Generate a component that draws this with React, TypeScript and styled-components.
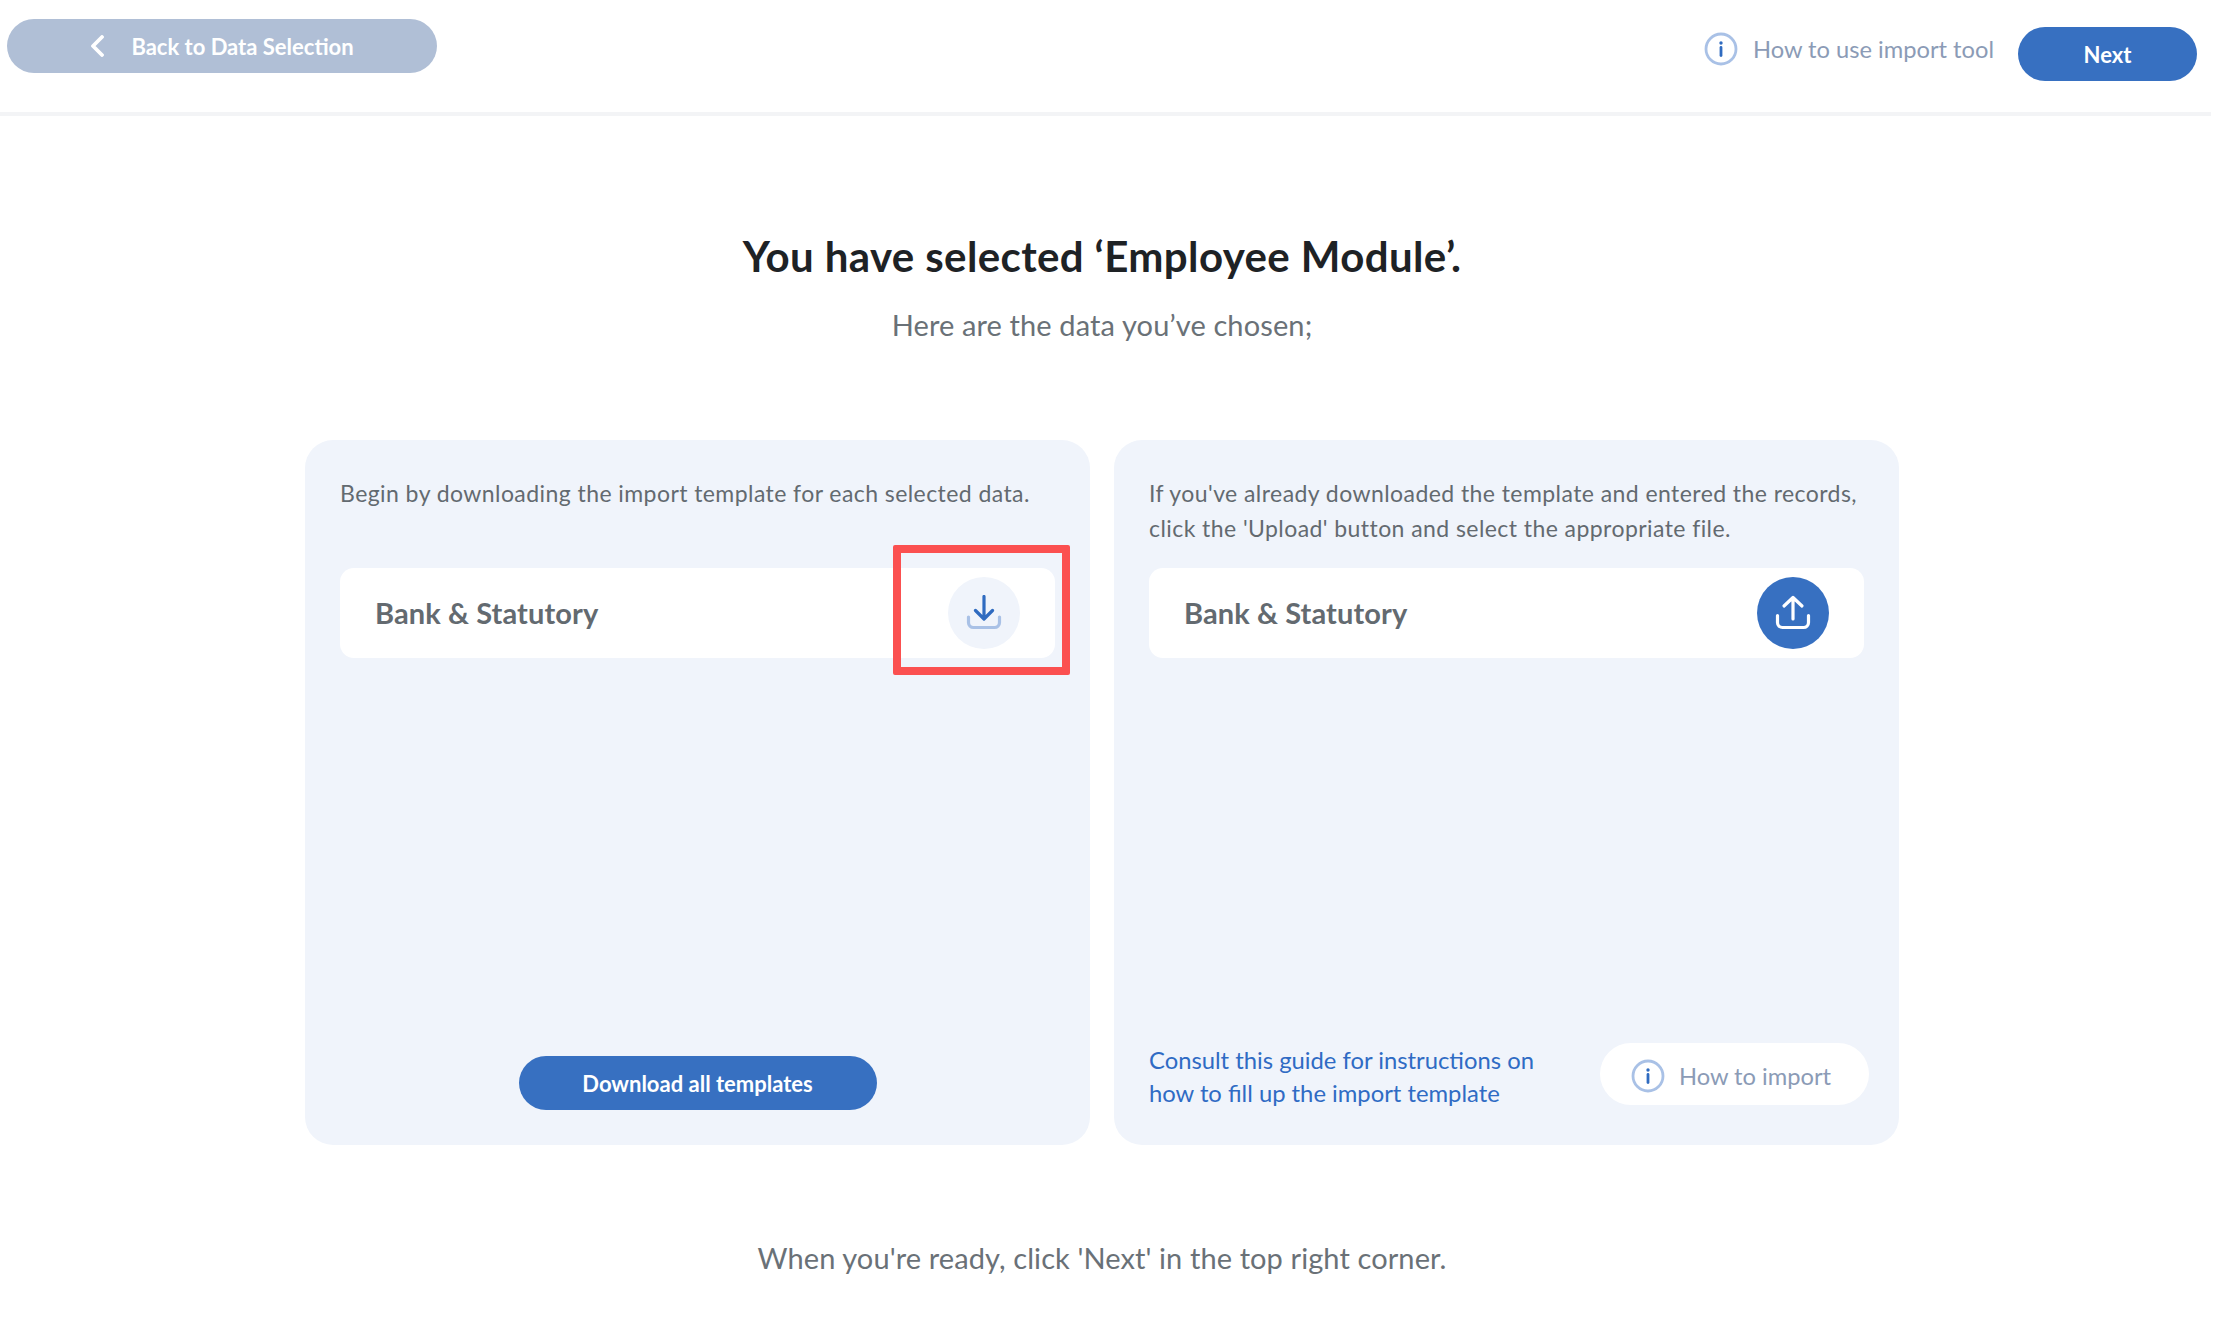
import React from "react";
import styled, { createGlobalStyle } from "styled-components";

const GlobalStyle = createGlobalStyle`
  html, body {
    margin: 0;
    padding: 0;
    background: #ffffff;
    font-family: "Lato", "Liberation Sans", sans-serif;
  }
  * {
    box-sizing: border-box;
  }
`;

const Page = styled.div`
  width: 2211px;
  height: 1337px;
  overflow: hidden;
  display: flex;
  flex-direction: column;
`;

const Header = styled.header`
  height: 116px;
  flex: none;
  display: flex;
  justify-content: space-between;
  align-items: flex-start;
  border-bottom: 4px solid #f3f4f6;
  padding: 19px 14px 0 7px;
`;

const Pill = styled.button<{ $width: number; $muted?: boolean }>`
  width: ${(props) => props.$width}px;
  height: 54px;
  flex: none;
  display: flex;
  align-items: center;
  justify-content: center;
  gap: 27px;
  border: none;
  border-radius: 27px;
  padding: 0;
  background: ${(props) => (props.$muted ? "#b0bfd6" : "#3770c1")};
  color: #ffffff;
  font-family: inherit;
  font-size: 22px;
  font-weight: 700;
`;

const HeaderRight = styled.div`
  display: flex;
  align-items: center;
  gap: 24px;
  margin-top: 8px;
`;

const HelpLink = styled.div`
  display: flex;
  align-items: center;
  gap: 15px;
  margin-bottom: 10px;
  color: #8b9bb6;
  font-size: 23.7px;
`;

const Main = styled.main`
  flex: 1;
  display: flex;
  flex-direction: column;
  align-items: center;
  padding-right: 7px;
`;

const Title = styled.h1`
  margin: 112px 0 0;
  height: 56px;
  line-height: 56px;
  color: #1e2225;
  font-size: 42px;
  font-weight: 700;
  letter-spacing: 0.38px;
`;

const Subtitle = styled.p`
  margin: 21px 0 0;
  height: 40px;
  line-height: 40px;
  color: #6a7177;
  font-size: 29px;
  letter-spacing: 0.12px;
`;

const Cards = styled.div`
  display: flex;
  gap: 24px;
  margin-top: 95px;
`;

const Card = styled.section`
  width: 785px;
  height: 705px;
  display: flex;
  flex-direction: column;
  border-radius: 28px;
  background: #f0f4fb;
  padding: 36px 35px 35px 35px;
`;

const CardText = styled.p`
  margin: 0;
  height: 92px;
  color: #636a70;
  font-size: 23px;
  line-height: 35px;
  letter-spacing: 0.43px;
`;

const Row = styled.div`
  position: relative;
  height: 90px;
  display: flex;
  align-items: center;
  justify-content: space-between;
  border-radius: 14px;
  background: #ffffff;
  padding: 0 35px;
`;

const RowLabel = styled.span`
  margin-bottom: 2px;
  color: #636a70;
  font-size: 29px;
  font-weight: 700;
  letter-spacing: 0.1px;
`;

const RoundIcon = styled.div<{ $filled?: boolean }>`
  width: 72px;
  height: 72px;
  display: flex;
  align-items: center;
  justify-content: center;
  border-radius: 50%;
  background: ${(props) => (props.$filled ? "#3770c1" : "#f0f4fb")};
`;

const Highlight = styled.div`
  position: absolute;
  top: -23px;
  right: -15px;
  width: 177px;
  height: 130px;
  border: 8px solid #fb5050;
  border-radius: 2px;
`;

const CardFooter = styled.div<{ $center?: boolean }>`
  margin-top: auto;
  display: flex;
  align-items: flex-end;
  justify-content: ${(props) => (props.$center ? "center" : "space-between")};
`;

const GuideLink = styled.div`
  color: #2f6bc4;
  font-size: 23.8px;
  line-height: 33px;
`;

const ImportPill = styled.div`
  width: 269px;
  height: 62px;
  display: flex;
  align-items: center;
  justify-content: center;
  gap: 14px;
  border-radius: 31px;
  background: #ffffff;
  color: #8b9bb6;
  font-size: 23.7px;
  margin: 0 -5px 5px 0;
  padding: 3px 7px 0 0;
`;

const FooterText = styled.p`
  margin: 93px 0 0;
  height: 40px;
  line-height: 40px;
  color: #6a7177;
  font-size: 29px;
  letter-spacing: 0.1px;
`;

const InfoIcon = () => (
  <svg width="34" height="34" viewBox="0 0 34 34" fill="none">
    <circle cx="17" cy="17" r="15" stroke="#a9c1e6" strokeWidth="2.8" />
    <circle cx="17" cy="11" r="1.7" fill="#2f6bc0" />
    <path d="M17 15.500v8" stroke="#2f6bc0" strokeWidth="2.8" strokeLinecap="round" />
  </svg>
);

const ChevronLeft = () => (
  <svg width="14" height="22" viewBox="0 0 14 22" fill="none">
    <path d="M12 2L3 11l9 9" stroke="#ffffff" strokeWidth="3.8" strokeLinecap="round" strokeLinejoin="round" />
  </svg>
);

const DownloadIcon = () => (
  <svg width="36" height="36" viewBox="0 0 36 36" fill="none">
    <path d="M2.500 22v5.500a5 5 0 0 0 5 5h21a5 5 0 0 0 5-5V22" stroke="#a9c1e6" strokeWidth="3.2" strokeLinecap="round" />
    <path d="M18 1.500v22M9.500 15.500l8.500 8.500 8.500-8.500" stroke="#2f6bc0" strokeWidth="3.2" strokeLinecap="round" strokeLinejoin="round" />
  </svg>
);

const UploadIcon = () => (
  <svg width="36" height="36" viewBox="0 0 36 36" fill="none">
    <path d="M2.500 20.500v7a5 5 0 0 0 5 5h21a5 5 0 0 0 5-5v-7" stroke="#ffffff" strokeWidth="3.2" strokeLinecap="round" />
    <path d="M18 24V2.500M9 11l9-8.500 9 8.500" stroke="#ffffff" strokeWidth="3.2" strokeLinecap="round" strokeLinejoin="round" />
  </svg>
);

const App: React.FC = () => {
  return (
    <Page>
      <GlobalStyle />
      <Header>
        <Pill $width={430} $muted>
          <ChevronLeft />
          Back to Data Selection
        </Pill>
        <HeaderRight>
          <HelpLink>
            <InfoIcon />
            How to use import tool
          </HelpLink>
          <Pill $width={179}>Next</Pill>
        </HeaderRight>
      </Header>
      <Main>
        <Title>You have selected ‘Employee Module’.</Title>
        <Subtitle>Here are the data you’ve chosen;</Subtitle>
        <Cards>
          <Card>
            <CardText>Begin by downloading the import template for each selected data.</CardText>
            <Row>
              <RowLabel>Bank &amp; Statutory</RowLabel>
              <RoundIcon>
                <DownloadIcon />
              </RoundIcon>
              <Highlight />
            </Row>
            <CardFooter $center>
              <Pill $width={358}>Download all templates</Pill>
            </CardFooter>
          </Card>
          <Card>
            <CardText>
              If you've already downloaded the template and entered the records,
              <br />
              click the 'Upload' button and select the appropriate file.
            </CardText>
            <Row>
              <RowLabel>Bank &amp; Statutory</RowLabel>
              <RoundIcon $filled>
                <UploadIcon />
              </RoundIcon>
            </Row>
            <CardFooter>
              <GuideLink>
                Consult this guide for instructions on
                <br />
                how to fill up the import template
              </GuideLink>
              <ImportPill>
                <InfoIcon />
                How to import
              </ImportPill>
            </CardFooter>
          </Card>
        </Cards>
        <FooterText>When you're ready, click 'Next' in the top right corner.</FooterText>
      </Main>
    </Page>
  );
};

export default App;
